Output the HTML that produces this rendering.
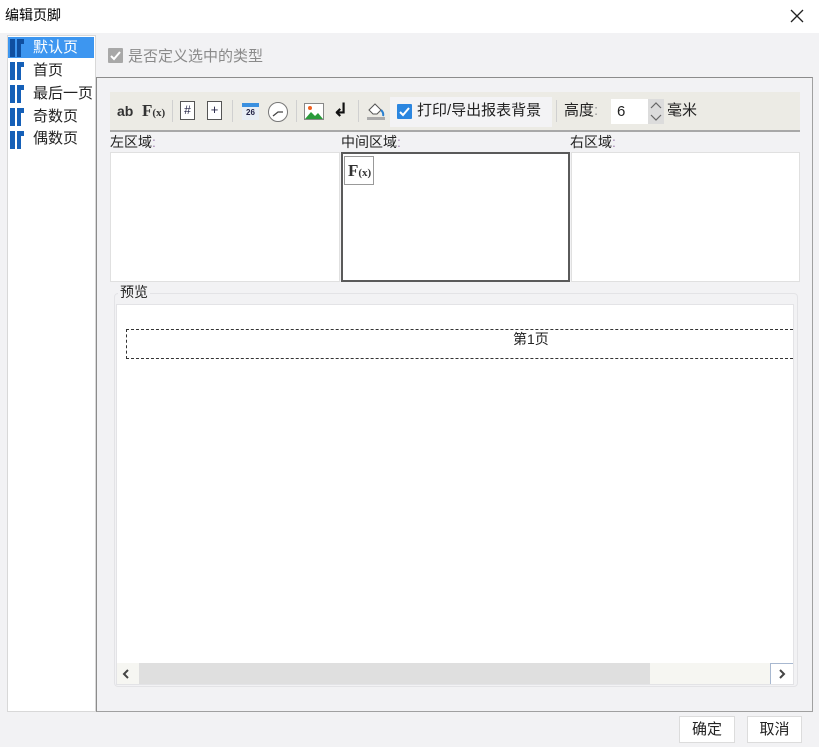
<!DOCTYPE html>
<html><head><meta charset="utf-8"><style>
*{margin:0;padding:0;box-sizing:border-box}
body{width:819px;height:747px;background:#f2f2f4;font-family:"Liberation Sans","Noto Sans CJK SC",sans-serif;font-size:14px;color:#222;position:relative;overflow:hidden}
.a{position:absolute}
.t{white-space:nowrap;line-height:1}
</style></head><body>
<div class="a" style="left:0;top:0;width:819px;height:33px;background:#fff"></div>
<div class="a t" style="left:5px;top:8px;font-size:14px;color:#000">编辑页脚</div>
<svg class="a" style="left:790px;top:9px" width="14" height="14"><path d="M1 1L13 13M13 1L1 13" stroke="#222" stroke-width="1.3"/></svg>

<!-- left list -->
<div class="a" style="left:7px;top:35px;width:89px;height:677px;background:#fff;border:1px solid #d8d8d8"></div>
<div class="a" style="left:8px;top:37px;width:86px;height:21px;background:#3d96f0"></div>
<div class="a" style="left:9px;top:39px">
<div style="position:relative;height:23px"><svg width="16" height="18" style="position:absolute;left:0;top:0"><path d="M1 0h5v18h-5zM8 0h7v5h-3v13h-4z" fill="#0f4fa0"/></svg><span class="t" style="position:absolute;left:24px;top:1px;color:#fff;font-size:15px">默认页</span></div>
<div style="position:relative;height:23px"><svg width="16" height="18" style="position:absolute;left:0;top:0"><path d="M1 0h5v18h-5zM8 0h7v5h-3v13h-4z" fill="#1560b8"/></svg><span class="t" style="position:absolute;left:24px;top:1px;font-size:15px">首页</span></div>
<div style="position:relative;height:23px"><svg width="16" height="18" style="position:absolute;left:0;top:0"><path d="M1 0h5v18h-5zM8 0h7v5h-3v13h-4z" fill="#1560b8"/></svg><span class="t" style="position:absolute;left:24px;top:1px;font-size:15px">最后一页</span></div>
<div style="position:relative;height:23px"><svg width="16" height="18" style="position:absolute;left:0;top:0"><path d="M1 0h5v18h-5zM8 0h7v5h-3v13h-4z" fill="#1560b8"/></svg><span class="t" style="position:absolute;left:24px;top:1px;font-size:15px">奇数页</span></div>
<div style="position:relative;height:23px"><svg width="16" height="18" style="position:absolute;left:0;top:0"><path d="M1 0h5v18h-5zM8 0h7v5h-3v13h-4z" fill="#1560b8"/></svg><span class="t" style="position:absolute;left:24px;top:0;font-size:15px">偶数页</span></div>
</div>

<!-- disabled checkbox -->
<div class="a" style="left:108px;top:48px;width:15px;height:15px;background:#a8a8a8;border-radius:1px"></div>
<svg class="a" style="left:108px;top:48px" width="15" height="15"><path d="M3 8l3 3 6-7" stroke="#fff" stroke-width="2" fill="none"/></svg>
<div class="a t" style="left:128px;top:49px;color:#8a8a8a;font-size:15px">是否定义选中的类型</div>

<!-- main panel -->
<div class="a" style="left:96px;top:77px;width:717px;height:635px;border:1px solid #a0a0a0;border-top-color:#8c8c8c;border-left-color:#8c8c8c"></div>

<!-- toolbar -->
<div class="a" style="left:110px;top:92px;width:690px;height:38px;background:#ecebe5"></div>
<div class="a" style="left:110px;top:130px;width:690px;height:2px;background:#a8a8a8"></div>
<div class="a t" style="left:117px;top:104px;font-weight:bold;font-size:14px;color:#333">ab</div>
<div class="a t" style="left:142px;top:102px;font-family:'Liberation Serif',serif;font-weight:bold;font-size:17px;color:#333">F<span style="font-size:11px">(x)</span></div>
<div class="a" style="left:172px;top:100px;width:1px;height:22px;background:#d0d0d0"></div>
<div class="a" style="left:180px;top:101px;width:15px;height:19px;border:1px solid #555;background:#fff;font-size:12px;line-height:16px;text-align:center;color:#224">#</div>
<div class="a" style="left:207px;top:101px;width:15px;height:19px;border:1px solid #555;background:#fff;font-size:13px;line-height:16px;text-align:center;color:#224">+</div>
<div class="a" style="left:232px;top:100px;width:1px;height:22px;background:#d0d0d0"></div>
<div class="a" style="left:242px;top:103px;width:17px;height:17px;background:#e8eef5;border-top:4px solid #3a90e0;font-size:8px;font-weight:bold;text-align:center;line-height:12px;color:#224">26</div>
<div class="a" style="left:268px;top:102px;width:20px;height:20px;border:1.5px solid #777;border-radius:50%;background:#fff"></div>
<svg class="a" style="left:268px;top:102px" width="20" height="20"><path d="M5 14l5-4h5" stroke="#444" fill="none" stroke-width="1.3"/></svg>
<div class="a" style="left:296px;top:100px;width:1px;height:22px;background:#d0d0d0"></div>
<svg class="a" style="left:304px;top:103px" width="20" height="17"><rect x="0.5" y="0.5" width="19" height="16" fill="#fff" stroke="#888"/><path d="M1 16l6-7 4 4 3-3 5 6z" fill="#2a9a3a"/><circle cx="6" cy="5" r="2" fill="#f06020"/></svg>
<div class="a t" style="left:333px;top:101px;font-size:18px;font-weight:bold;color:#111">↲</div>
<div class="a" style="left:358px;top:100px;width:1px;height:22px;background:#d0d0d0"></div>
<svg class="a" style="left:365px;top:100px" width="22" height="22"><path d="M4 10l6-6 6 6-4 4h-4z" fill="#fff" stroke="#555"/><path d="M16 10q3 3 2 6" stroke="#2a80d0" stroke-width="2" fill="none"/><rect x="2" y="17" width="18" height="3" fill="#aaa"/></svg>
<div class="a" style="left:390px;top:97px;width:162px;height:30px;background:#f3f3f5"></div>
<div class="a" style="left:397px;top:104px;width:15px;height:15px;background:#2b86e0;border-radius:1px"></div>
<svg class="a" style="left:397px;top:104px" width="15" height="15"><path d="M3 8l3 3 6-7" stroke="#fff" stroke-width="2" fill="none"/></svg>
<div class="a t" style="left:417px;top:103px;font-size:15px">打印/导出报表背景</div>
<div class="a" style="left:556px;top:100px;width:1px;height:22px;background:#d0d0d0"></div>
<div class="a t" style="left:564px;top:103px;font-size:15px">高度<span style="color:#999">:</span></div>
<div class="a" style="left:611px;top:99px;width:38px;height:25px;background:#fff"></div>
<div class="a t" style="left:617px;top:104px;font-size:15px">6</div>
<div class="a" style="left:648px;top:99px;width:16px;height:25px;background:#dcdcdc"></div>
<svg class="a" style="left:648px;top:99px" width="16" height="25"><path d="M3 9l5-5 5 5M3 16l5 5 5-5" stroke="#666" fill="none" stroke-width="1.2"/></svg>
<div class="a t" style="left:667px;top:103px;font-size:15px">毫米</div>

<!-- areas -->
<div class="a t" style="left:110px;top:135px;font-size:14px">左区域<span style="color:#a080b0">:</span></div>
<div class="a t" style="left:341px;top:135px;font-size:14px">中间区域<span style="color:#a080b0">:</span></div>
<div class="a t" style="left:570px;top:135px;font-size:14px">右区域<span style="color:#a080b0">:</span></div>
<div class="a" style="left:110px;top:152px;width:230px;height:130px;background:#fff;border:1px solid #e0e0e0"></div>
<div class="a" style="left:341px;top:152px;width:229px;height:130px;background:#fff;border:2px solid #5a5a5a"></div>
<div class="a t" style="left:344px;top:156px;width:30px;height:29px;border:1px solid #999;font-family:'Liberation Serif',serif;font-weight:bold;font-size:17px;color:#333;padding:5px 0 0 3px">F<span style="font-size:11px">(x)</span></div>
<div class="a" style="left:571px;top:152px;width:229px;height:130px;background:#fff;border:1px solid #e0e0e0"></div>

<!-- preview -->
<div class="a" style="left:114px;top:293px;width:684px;height:394px;border:1px solid #e3e3e6;border-radius:4px"></div>
<div class="a t" style="left:118px;top:285px;background:#f2f2f4;padding:0 2px;font-size:14px">预览</div>
<div class="a" style="left:116px;top:304px;width:678px;height:381px;background:#fff;border:1px solid #e3e3e6"></div>
<div class="a" style="left:126px;top:329px;width:667px;height:30px;border:1.5px dashed #333;border-right:none"></div>
<div class="a t" style="left:513px;top:332px;font-size:14px">第1页</div>
<div class="a" style="left:117px;top:663px;width:676px;height:21px;background:#f6f6f2"></div>
<div class="a" style="left:139px;top:663px;width:511px;height:21px;background:#dfdfdf"></div>
<svg class="a" style="left:119px;top:666px" width="14" height="16"><path d="M9 4l-4 4 4 4" stroke="#444" stroke-width="2" fill="none"/></svg>
<div class="a" style="left:770px;top:663px;width:23px;height:21px;background:#fff;border-left:1px solid #a8b8d0;border-top:1px solid #a8b8d0"></div>
<svg class="a" style="left:775px;top:666px" width="14" height="16"><path d="M5 4l4 4-4 4" stroke="#444" stroke-width="2" fill="none"/></svg>

<!-- buttons -->
<div class="a t" style="left:679px;top:716px;width:56px;height:27px;background:#fff;border:1px solid #dcdcdc;text-align:center;line-height:25px;font-size:15px">确定</div>
<div class="a t" style="left:747px;top:716px;width:55px;height:27px;background:#fff;border:1px solid #dcdcdc;text-align:center;line-height:25px;font-size:15px">取消</div>
</body></html>
